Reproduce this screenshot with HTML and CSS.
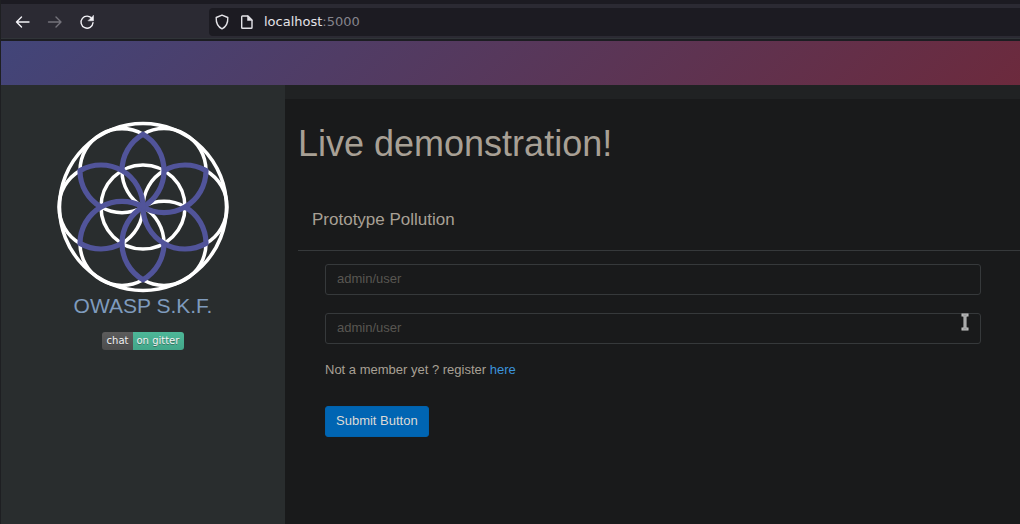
FILE: index.html
```html
<!DOCTYPE html>
<html lang="en">
<head>
<meta charset="utf-8">
<title>Live demonstration</title>
<link rel="stylesheet" href="styles.css">
</head>
<body>
<header class="browser">
  <nav class="nav-buttons" aria-label="Browser">
    <button class="icon-button" aria-label="Back"><svg viewBox="0 0 16 16"><path d="M14 8H1.500M6.500 3l-5 5 5 5"/></svg></button>
    <button class="icon-button muted" aria-label="Forward" disabled><svg viewBox="0 0 16 16"><path d="M1.500 8H14M9 3l5 5-5 5"/></svg></button>
    <button class="icon-button" aria-label="Reload"><svg viewBox="0 0 16 16"><path d="M13 4.800A6 6 0 1 0 14 8.700"/><path class="solid" d="M14.500 1.600v5.200H9.300z"/></svg></button>
  </nav>
  <div class="address">
    <svg class="address-icon" viewBox="0 0 16 16"><path d="M8 1.200l5.800 2.300c.2 5.500-1.200 9.200-5.800 11.300C3.400 12.700 2 9 2.200 3.500z"/></svg>
    <svg class="address-icon" viewBox="0 0 16 16"><path d="M3.500 2h5.500l4 4v7.500q0 .8-.8.8H3.500q-.8 0-.8-.8V2.800q0-.8.8-.8z"/><path class="solid" d="M8.500 2v4.500H13z"/></svg>
    <span class="url">localhost<span class="port">:5000</span></span>
  </div>
</header>
<div class="banner"></div>
<div class="layout">
  <aside class="sidebar">
    <svg class="logo" viewBox="-86 -86 172 172" role="img" aria-label="OWASP S.K.F. logo">
      <defs>
        <g id="white-arcs">
          <path d="M0-72.750A42 42 0 0 1 63-36.370"/>
          <path d="M-21-36.370A42 42 0 0 0 0 0"/>
        </g>
        <g id="petal">
          <path d="M0 0A42 42 0 0 0 0-72.750A42 42 0 0 0-21-36.370"/>
        </g>
      </defs>
      <g class="logo-white">
        <circle r="83.500"/>
        <circle r="42"/>
        <use href="#white-arcs"/>
        <use href="#white-arcs" transform="rotate(60)"/>
        <use href="#white-arcs" transform="rotate(120)"/>
        <use href="#white-arcs" transform="rotate(180)"/>
        <use href="#white-arcs" transform="rotate(240)"/>
        <use href="#white-arcs" transform="rotate(300)"/>
      </g>
      <g class="logo-purple">
        <use href="#petal"/>
        <use href="#petal" transform="rotate(60)"/>
        <use href="#petal" transform="rotate(120)"/>
        <use href="#petal" transform="rotate(180)"/>
        <use href="#petal" transform="rotate(240)"/>
        <use href="#petal" transform="rotate(300)"/>
      </g>
    </svg>
    <div class="brand">OWASP S.K.F.</div>
    <a class="chat" href="#"><span class="chat-label">chat</span><span class="chat-target">on gitter</span></a>
  </aside>
  <main class="content">
    <h1>Live demonstration!</h1>
    <section class="panel">
      <h2>Prototype Pollution</h2>
      <form class="login">
        <input class="field" type="text" placeholder="admin/user" aria-label="Username">
        <div class="field-wrap">
          <input class="field" type="text" placeholder="admin/user" aria-label="Password">
          <svg class="pointer" viewBox="0 0 8 18"><path class="pointer-edge" d="M.5 2h7M.5 16h7M4 2v14"/><path class="pointer-core" d="M1.500 2h5M1.500 16h5M4 2v14"/></svg>
        </div>
        <p class="register">Not a member yet ? register <a href="#">here</a></p>
        <button class="submit" type="button">Submit Button</button>
      </form>
    </section>
  </main>
</div>
</body>
</html>
```
FILE: styles.css
```css
* { box-sizing: border-box; }
body {
  margin: 0;
  min-height: 100vh;
  display: flex;
  flex-direction: column;
  background: #191a1b;
  border-left: 1px solid #1e1f22;
  color: #a8a095;
  font: 13px/20px "Liberation Sans", Arial, sans-serif;
}
.browser {
  display: flex;
  align-items: center;
  height: 41px;
  border-top: 4px solid #1c1b22;
  border-bottom: 2px solid #1c1d22;
  background: #2b2a33;
  box-shadow: inset 0 -1px #303438;
}
.nav-buttons {
  display: flex;
  gap: 16px;
  width: 208px;
  padding-left: 14px;
}
.icon-button {
  display: flex;
  width: 16px;
  height: 16px;
  padding: 0;
  border: 0;
  background: none;
  color: #f4f3f8;
}
.muted { color: #74737b; }
.browser svg {
  width: 16px;
  height: 16px;
  fill: none;
  stroke: currentColor;
  stroke-width: 1.4;
  stroke-linecap: round;
  stroke-linejoin: round;
}
.browser .solid { fill: currentColor; stroke-width: 0.5; }
.address {
  display: flex;
  flex: 1;
  align-items: center;
  gap: 9px;
  height: 28px;
  padding-left: 5px;
  border-radius: 4px 0 0 4px;
  background: #1c1b22;
  color: #e4e3e8;
  font: 13px/18px "DejaVu Sans", sans-serif;
}
.port { color: #85848c; }
.banner {
  height: 44px;
  background: linear-gradient(135deg, #424579 0%, #6c2a3d 100%);
}
.layout { display: flex; flex: 1; }
.sidebar {
  display: flex;
  flex-direction: column;
  align-items: center;
  width: 284px;
  padding-top: 36px;
  background: #292d2e;
}
.logo {
  width: 172px;
  height: 172px;
  fill: none;
}
.logo-white { stroke: #fff; stroke-width: 3.5; }
.logo-purple { stroke: #51549a; stroke-width: 5.2; }
.brand {
  color: #7f9bbd;
  font-size: 21px;
  line-height: 26px;
}
.chat {
  display: flex;
  margin-top: 13px;
  overflow: hidden;
  border-radius: 3px;
  color: #f2f2f2;
  font: 10px/18px "DejaVu Sans", sans-serif;
  text-decoration: none;
  text-shadow: 0 1px #3338;
}
.chat-label { padding: 0 4px 0 5px; background: linear-gradient(#5c5c5c, #4c4c4c); }
.chat-target { padding: 0 5px 0 4px; background: linear-gradient(#4db798, #42a689); }
.content {
  flex: 1;
  min-width: 0;
  border-top: 14px solid #202223;
  padding-left: 13px;
}
h1 {
  margin: 25px 0 0;
  font-size: 36px;
  font-weight: 400;
  line-height: 40px;
}
.panel { margin-top: 25px; }
h2 {
  margin: 0;
  padding: 20px 14px 19px;
  border-bottom: 1px solid #36393b;
  font-size: 17px;
  font-weight: 400;
  line-height: 22px;
}
.login { padding: 13px 39px 0 27px; }
.field-wrap { position: relative; margin-top: 18px; }
.field {
  display: block;
  width: 100%;
  height: 31px;
  padding: 0 11px 2px;
  border: 1px solid #36393b;
  border-radius: 3px;
  background: #191a1b;
  color: inherit;
  font: inherit;
}
.field::placeholder { color: #585651; opacity: 1; }
.pointer {
  position: absolute;
  top: 0;
  right: 12px;
  width: 8px;
  height: 18px;
  fill: none;
}
.pointer-edge { stroke: #c8c8c8; stroke-width: 3; }
.pointer-core { stroke: #8c8e8f; stroke-width: 1; }
.register { margin: 16px 0 26px; }
.register a { color: #3b94dc; text-decoration: none; }
.submit {
  display: block;
  height: 31px;
  padding: 0 10px 2px;
  border: 1px solid #0062ad;
  border-radius: 3px;
  background: #0065b3;
  color: #dcdad6;
  font: inherit;
}
```
